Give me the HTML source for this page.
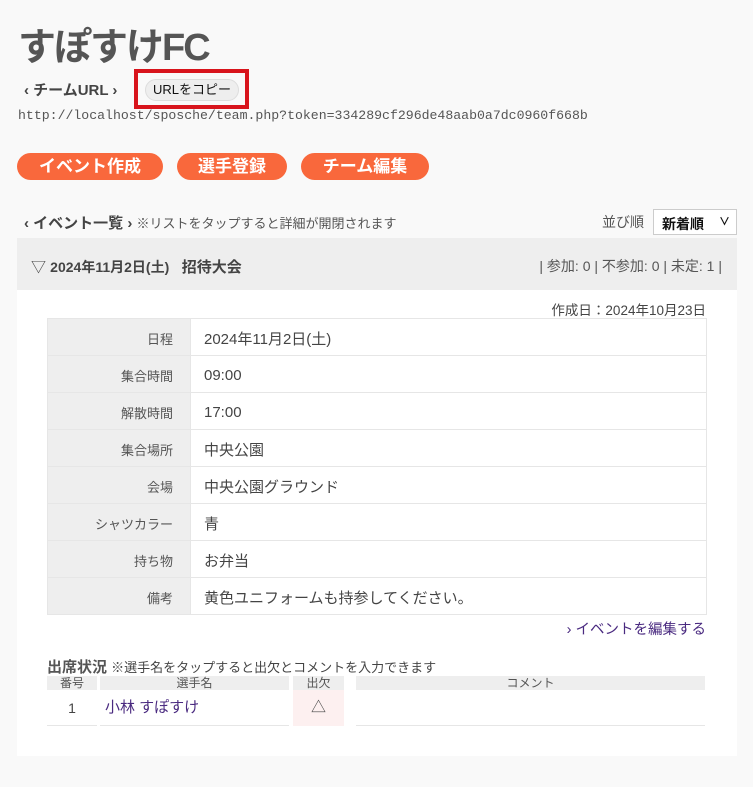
<!DOCTYPE html>
<html><head><meta charset="utf-8"><style>
*{margin:0;padding:0;box-sizing:border-box}
body{width:753px;height:787px;background:#f9f9f9;font-family:"Liberation Sans","Noto Sans CJK JP",sans-serif;color:#444;position:relative;overflow:hidden}
.a{position:absolute;white-space:nowrap}
h1{position:absolute;left:18px;top:16px;font-size:38px;font-weight:bold;color:#555;letter-spacing:-2px}
.btn{position:absolute;top:153px;height:27px;background:#f9683c;color:#fff;border-radius:14px;font-size:17px;font-weight:bold;text-align:center;line-height:27px}
.panel{position:absolute;left:17px;top:290px;width:720px;height:466px;background:#fff}
table.d{position:absolute;left:47px;top:318px;width:660px;border-collapse:collapse;font-size:15px}
table.d td{height:37px;border:1px solid #e6e6e6;padding-top:2px}
table.d td.l{width:143px;background:#eee;text-align:right;padding-right:17px;font-size:13px;color:#555}
table.d td.v{padding-left:13px;color:#444}
</style></head><body>
<h1>すぽすけFC</h1>
<div class="a" style="left:24px;top:79px;font-size:15px;font-weight:bold;color:#444">‹ チームURL ›</div>
<div class="a" style="left:134px;top:69px;width:115px;height:40px;border:4px solid #d8141c"></div>
<div class="a" style="left:145px;top:79px;width:94px;height:22px;background:#eee;border:1px solid #ddd;border-radius:11px;font-size:13px;color:#111;text-align:center;line-height:20px">URLをコピー</div>
<div class="a" style="left:18px;top:108px;font-family:'Liberation Mono',monospace;font-size:13.2px;color:#555">http://localhost/sposche/team.php?token=334289cf296de48aab0a7dc0960f668b</div>
<div class="btn" style="left:17px;width:146px">イベント作成</div>
<div class="btn" style="left:177px;width:110px">選手登録</div>
<div class="btn" style="left:301px;width:128px">チーム編集</div>
<div class="a" style="left:24px;top:212px;font-size:15px;font-weight:bold;color:#444">‹ イベント一覧 › <span style="font-size:13px;font-weight:normal;color:#555">※リストをタップすると詳細が開閉されます</span></div>
<div class="a" style="left:602px;top:212px;font-size:14px;color:#555">並び順</div>
<div class="a" style="left:653px;top:209px;width:84px;height:26px;background:#fff;border:1px solid #ccc;font-size:14px;font-weight:bold;color:#111;padding:4px 0 0 8px">新着順<span style="position:absolute;right:6px;top:3px;font-size:11px">∨</span></div>
<div class="a" style="left:17px;top:238px;width:720px;height:52px;background:#eee"></div>
<div class="a" style="left:31px;top:256px;font-size:15px;color:#444">▽ <b style="font-size:14px">2024年11月2日(土)</b>&nbsp;&nbsp; <b>招待大会</b></div>
<div class="a" style="right:31px;top:256px;font-size:14px;color:#555">| 参加: 0 | 不参加: 0 | 未定: 1 |</div>
<div class="panel"></div>
<div class="a" style="right:47px;top:299px;font-size:13.5px;color:#444">作成日：2024年10月23日</div>
<table class="d">
<tr><td class="l">日程</td><td class="v">2024年11月2日(土)</td></tr>
<tr><td class="l">集合時間</td><td class="v">09:00</td></tr>
<tr><td class="l">解散時間</td><td class="v">17:00</td></tr>
<tr><td class="l">集合場所</td><td class="v">中央公園</td></tr>
<tr><td class="l">会場</td><td class="v">中央公園グラウンド</td></tr>
<tr><td class="l">シャツカラー</td><td class="v">青</td></tr>
<tr><td class="l">持ち物</td><td class="v">お弁当</td></tr>
<tr><td class="l">備考</td><td class="v">黄色ユニフォームも持参してください。</td></tr>
</table>
<div class="a" style="right:47px;top:618px;font-size:14.5px;color:#4a2a80">› イベントを編集する</div>
<div class="a" style="left:47px;top:656px;font-size:15px;font-weight:bold;color:#555">出席状況 <span style="font-size:13px;font-weight:normal;color:#444">※選手名をタップすると出欠とコメントを入力できます</span></div>
<div class="a" style="left:47px;top:676px;width:50px;height:14px;background:#eee;font-size:12px;text-align:center;line-height:14px;color:#555">番号</div>
<div class="a" style="left:100px;top:676px;width:189px;height:14px;background:#eee;font-size:12px;text-align:center;line-height:14px;color:#555">選手名</div>
<div class="a" style="left:293px;top:676px;width:51px;height:14px;background:#eee;font-size:12px;text-align:center;line-height:14px;color:#555">出欠</div>
<div class="a" style="left:356px;top:676px;width:349px;height:14px;background:#eee;font-size:12px;text-align:center;line-height:14px;color:#555">コメント</div>
<div class="a" style="left:47px;top:690px;width:50px;height:36px;border-bottom:1px solid #e6e6e6;text-align:center;line-height:36px;font-size:14px">1</div>
<div class="a" style="left:100px;top:690px;width:189px;height:36px;border-bottom:1px solid #e6e6e6;line-height:36px;font-size:15px;color:#4a2a80;padding-left:5px">小林 すぽすけ</div>
<div class="a" style="left:293px;top:690px;width:51px;height:36px;background:#fdf0f0;text-align:center;line-height:36px;font-size:15px">△</div>
<div class="a" style="left:356px;top:690px;width:349px;height:36px;border-bottom:1px solid #e6e6e6"></div>
</body></html>
